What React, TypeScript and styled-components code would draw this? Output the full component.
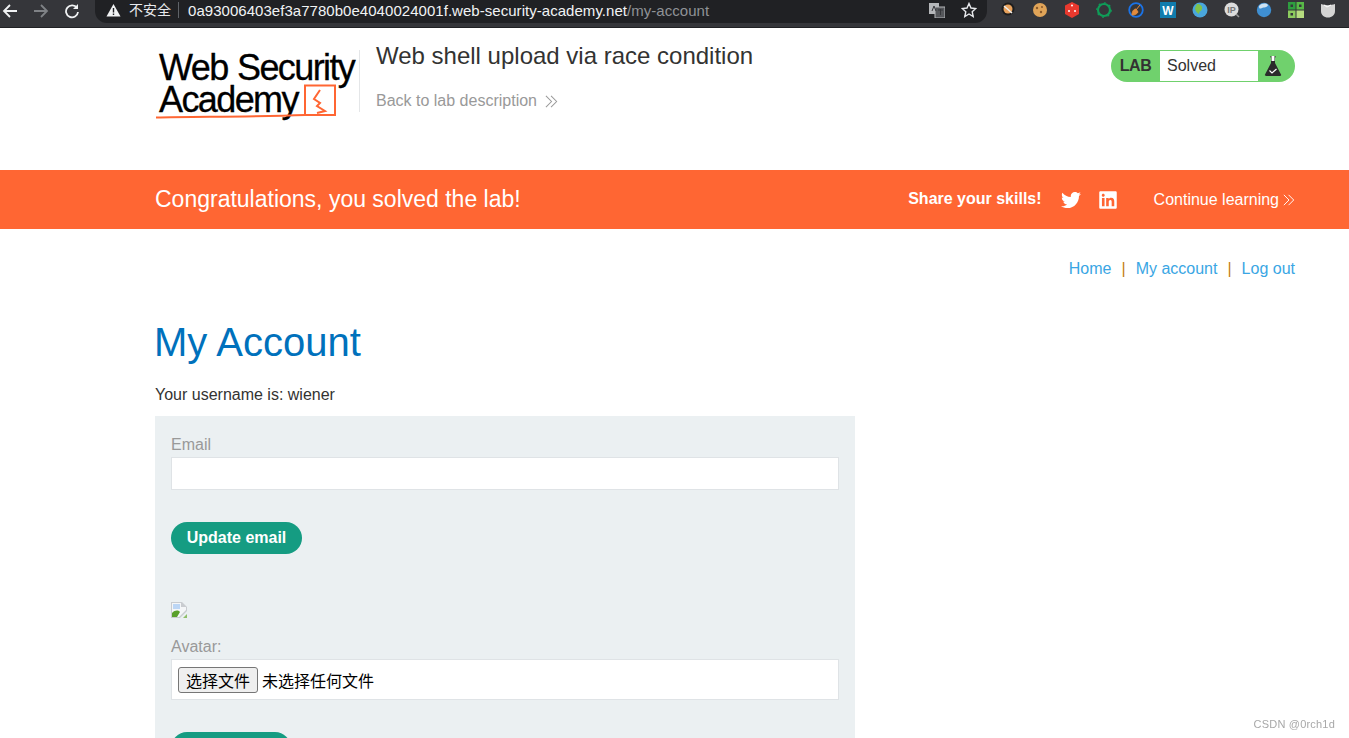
import React from 'react'
import styled, { createGlobalStyle } from 'styled-components'
import { FaTwitter, FaLinkedin } from 'react-icons/fa'

const GlobalStyle = createGlobalStyle`
  html, body {
    margin: 0;
    height: 738px;
    overflow: hidden;
    background: #fff;
    font-family: "Liberation Sans", Arial, sans-serif;
    font-size: 16px;
    color: #333332;
  }
`

// Browser chrome
const Chrome = styled.div`
  height: 27px;
  background: #35363a;
  border-bottom: 1px solid #202124;
  display: flex;
  align-items: flex-start;
`

const NavIcons = styled.div`
  width: 95px;
  height: 21px;
  flex: none;
  display: flex;
  align-items: center;
  gap: 15px;
  padding-left: 2px;
  box-sizing: border-box;
`

const Omnibox = styled.div`
  width: 892px;
  height: 23px;
  flex: none;
  background: #202124;
  border-radius: 0 0 12px 12px;
  display: flex;
  align-items: center;
  padding: 0 10px 3px 11px;
  box-sizing: border-box;
  color: #e8eaed;
  font-size: 14px;
  font-family: "Liberation Sans", "Noto Sans CJK SC", sans-serif;
`

const Insecure = styled.span`
  font-size: 14px;
  margin-left: 8px;
  padding-right: 7px;
  border-right: 1px solid #5f6368;
  line-height: 16px;
`

const Url = styled.span`
  margin-left: 9px;
  font-size: 15px;
  letter-spacing: 0.04px;
  flex: 1;
  color: #f1f3f4;
`

const UrlPath = styled.span`
  color: #8f9296;
`

const OmniIcons = styled.div`
  display: flex;
  align-items: center;
  gap: 16px;
`

const Extensions = styled.div`
  flex: 1;
  height: 20px;
  display: flex;
  align-items: center;
  gap: 16.1px;
  padding-left: 12.5px;
`

// Lab header
const Container = styled.div`
  width: 1140px;
  margin-left: 155px;
  box-sizing: border-box;
`

const LabHeader = styled(Container)`
  height: 142px;
  display: flex;
  align-items: flex-start;
`

const Logo = styled.div`
  position: relative;
  width: 204px;
  height: 64px;
  margin-top: 24px;
  flex: none;
  color: #000;
  font-size: 36px;
  line-height: 32px;
  letter-spacing: -1.6px;
  word-spacing: 1px;
  -webkit-text-stroke: 0.3px #000;
  padding-left: 4px;
  box-sizing: border-box;
  white-space: nowrap;
`

const LogoMark = styled.svg`
  position: absolute;
  left: 0;
  top: 30px;
`

const TitleBlock = styled.div`
  margin-top: 22px;
  padding: 0 0 0 16px;
  height: 62px;
  border-left: 1px solid #e4e6e8;
  flex: 1;
`

const LabTitle = styled.h2`
  margin: 0;
  font-size: 24px;
  font-weight: 400;
  line-height: 12px;
  padding-top: 0;
  color: #333332;
`

const BackLink = styled.a`
  display: flex;
  align-items: center;
  gap: 8px;
  margin-top: 30px;
  font-size: 16px;
  line-height: 18px;
  color: #999;
`

const StatusPill = styled.div`
  width: 184px;
  height: 32px;
  margin-top: 22px;
  border-radius: 16px;
  background: #70d16d;
  display: flex;
  align-items: center;
  flex: none;
  overflow: hidden;
`

const PillLabel = styled.span`
  width: 49px;
  text-align: center;
  font-weight: 700;
  font-size: 16px;
  letter-spacing: -0.4px;
  color: #333332;
  box-sizing: border-box;
`

const PillValue = styled.div`
  width: 98px;
  height: 30px;
  background: #fff;
  line-height: 29px;
  padding-left: 7px;
  box-sizing: border-box;
  font-size: 16px;
  color: #333332;
`

const Flask = styled.svg`
  margin-left: 6px;
`

// Banner
const Banner = styled.div`
  height: 59px;
  background: #ff6633;
  color: #fff;
`

const BannerInner = styled(Container)`
  height: 100%;
  display: flex;
  align-items: center;
`

const BannerTitle = styled.h4`
  margin: 0;
  flex: 1;
  font-size: 23px;
  font-weight: 400;
`

const Share = styled.span`
  font-weight: 700;
  font-size: 16px;
  margin-top: -2px;
`

const SocialRow = styled.div`
  display: flex;
  align-items: center;
  gap: 17px;
  margin: 0 36px 0 19px;
  font-size: 20px;
  height: 20px;
`

const Continue = styled.a`
  display: flex;
  align-items: center;
  gap: 4px;
  font-size: 16px;
`

// Page
const TopLinks = styled(Container)`
  display: flex;
  justify-content: flex-end;
  padding-top: 31px;
  line-height: 18px;
  height: 73px;
  color: #c47d0e;
`

const TopLink = styled.a`
  color: #3aa6e4;
`

const Sep = styled.span`
  margin: 0 10px;
`

const Heading = styled.h1`
  margin: 17px 0 0 -1px;
  font-size: 40px;
  font-weight: 400;
  line-height: 46px;
  height: 46px;
  color: #0071bc;
`

const Username = styled.p`
  margin: 21px 0 12px;
  line-height: 18px;
  color: #333332;
`

const Panel = styled.div`
  width: 700px;
  padding: 20px 16px 16px;
  box-sizing: border-box;
  background: #ebf0f2;
`

const FieldLabel = styled.label`
  display: block;
  color: #999;
  line-height: 18px;
  height: 21px;
`

const EmailInput = styled.div`
  height: 33px;
  background: #fff;
  border: 1px solid #dfe3e6;
  box-sizing: border-box;
`

const PillButton = styled.button<{ $wide: number }>`
  display: block;
  width: ${(p) => p.$wide}px;
  height: 32px;
  border: 0;
  border-radius: 16px;
  background: #159c82;
  color: #fff;
  font-family: inherit;
  font-size: 16px;
  font-weight: 700;
  padding: 0;
`

const EmailButton = styled(PillButton)`
  margin-top: 32px;
`

const BrokenImage = styled.svg`
  display: block;
  margin-top: 48px;
`

const AvatarLabel = styled(FieldLabel)`
  margin-top: 20px;
  height: 21px;
`

const FileBox = styled.div`
  height: 41px;
  background: #fff;
  border: 1px solid #dfe3e6;
  box-sizing: border-box;
  display: flex;
  align-items: center;
  padding-left: 6px;
  font-family: "Noto Sans CJK SC", sans-serif;
  font-size: 16px;
  color: #000;
  gap: 4px;
`

const FileButton = styled.span`
  width: 80px;
  height: 26px;
  box-sizing: border-box;
  border: 1px solid #767676;
  border-radius: 3px;
  background: #efefef;
  line-height: 24px;
  text-align: center;
`

const UploadButton = styled(PillButton)`
  margin-top: 32px;
`

const Watermark = styled.div`
  position: fixed;
  right: 14px;
  top: 717px;
  font-size: 11px;
  line-height: 14px;
  letter-spacing: 0.2px;
  color: #a8a8a8;
`

function Chevrons({ color, size }: { color: string; size: number }): JSX.Element {
  return (
    <svg width={size} height={size} viewBox='0 0 14 14' fill='none' stroke={color} strokeWidth='1.1'>
      <path d='M1 1l6 6-6 6M6.500 1l6 6-6 6' />
    </svg>
  )
}

function Extension({ children }: { children: React.ReactNode }): JSX.Element {
  return (
    <svg width='16' height='16' viewBox='0 0 16 16'>
      {children}
    </svg>
  )
}

export default function App(): JSX.Element {
  return (
    <>
      <GlobalStyle />
      <Chrome>
        <NavIcons>
          <svg width='16' height='16' viewBox='0 0 16 16' fill='none' stroke='#f1f3f4' strokeWidth='1.8'>
            <path d='M15 8H2M8 2L2 8l6 6' />
          </svg>
          <svg width='16' height='16' viewBox='0 0 16 16' fill='none' stroke='#7f8286' strokeWidth='1.8'>
            <path d='M1 8h13M8 2l6 6-6 6' />
          </svg>
          <svg width='16' height='16' viewBox='0 0 16 16' fill='none' stroke='#f1f3f4' strokeWidth='1.8'>
            <path d='M13 5a6 6 0 1 0 1 4' />
            <path d='M14 1v5H9' fill='#f1f3f4' stroke='none' />
          </svg>
        </NavIcons>
        <Omnibox>
          <svg width='15' height='14' viewBox='0 0 15 14'>
            <path d='M7.500 1L14.500 13.500H.5z' fill='#f1f3f4' />
            <path d='M6.800 5h1.400v4.500H6.800zM6.800 10.500h1.400V12H6.800z' fill='#202124' />
          </svg>
          <Insecure>不安全</Insecure>
          <Url>
            0a93006403ef3a7780b0e4040024001f.web-security-academy.net<UrlPath>/my-account</UrlPath>
          </Url>
          <OmniIcons>
            <svg width='16' height='15' viewBox='0 0 16 15'>
              <rect x='0' y='0' width='10' height='11' fill='#b5b7ba' />
              <rect x='6' y='4' width='10' height='11' fill='#55575b' stroke='#b5b7ba' />
              <path d='M3 8l2-5 2 5M9 7h5M11.500 6v6' stroke='#35363a' strokeWidth='1' fill='none' />
            </svg>
            <svg width='16' height='16' viewBox='0 0 16 16' fill='none' stroke='#e8eaed' strokeWidth='1.400'>
              <path d='M8 1.500l2 4.500 4.800.5-3.600 3.200 1 4.800L8 12l-4.200 2.500 1-4.800L1.200 6.500 6 6z' />
            </svg>
          </OmniIcons>
        </Omnibox>
        <Extensions>
          <Extension>
            <circle cx='8' cy='7' r='6.500' fill='#1d1d1d' />
            <circle cx='8' cy='7' r='4.500' fill='#e8a25c' />
            <path d='M4 4l8 7' stroke='#eee' strokeWidth='1.500' />
          </Extension>
          <Extension>
            <circle cx='8' cy='8' r='7' fill='#e0a458' />
            <circle cx='5' cy='6' r='1.200' fill='#8a5a2b' />
            <circle cx='10' cy='5' r='1' fill='#8a5a2b' />
            <circle cx='9' cy='10' r='1.200' fill='#8a5a2b' />
          </Extension>
          <Extension>
            <path d='M8 0l7 3.500v8.500L8 16l-7-4V3.500z' fill='#e8392e' />
            <circle cx='8' cy='3.500' r='1' fill='#fff' />
            <circle cx='5' cy='9' r='1' fill='#fff' />
            <circle cx='11' cy='9' r='1' fill='#fff' />
          </Extension>
          <Extension>
            <circle cx='8' cy='8' r='6' fill='none' stroke='#0f9d58' strokeWidth='2.200' />
            <circle cx='8' cy='8' r='7.200' fill='none' stroke='#0f9d58' strokeWidth='1.200' strokeDasharray='2 3.600' />
          </Extension>
          <Extension>
            <circle cx='8' cy='8' r='6.800' fill='#35363a' stroke='#1a73e8' strokeWidth='1.800' />
            <path d='M12 3L8 8M4 13c0-4 2-6 4-6l2 3c-1 2-3 3-6 3z' fill='#e38b3c' stroke='#e38b3c' />
          </Extension>
          <svg width='16' height='16' viewBox='0 0 16 16'>
            <rect width='16' height='16' fill='#117cad' />
            <text x='8' y='12.500' textAnchor='middle' fontSize='12' fontWeight='700' fill='#fff' fontFamily='Liberation Sans'>W</text>
          </svg>
          <Extension>
            <circle cx='8' cy='8' r='7.500' fill='#49a6dc' />
            <path d='M5 2c3 0 6 2 5 5s-3 2-3 5c-2-1-4-3-4-6z' fill='#7fc24a' />
          </Extension>
          <svg width='16' height='16' viewBox='0 0 16 16'>
            <circle cx='7.500' cy='7.500' r='7' fill='#dcdcdc' />
            <text x='7.500' y='11' textAnchor='middle' fontSize='9' fontWeight='700' fill='#777' fontFamily='Liberation Sans'>IP</text>
            <path d='M12 12l3 3' stroke='#999' strokeWidth='1.500' />
          </svg>
          <Extension>
            <circle cx='8' cy='8' r='7.200' fill='#3f8fd2' />
            <path d='M3 4c3-3 7-3 9-1-1 3-4 2-6 3S3 7 3 4z' fill='#cfe3f2' />
          </Extension>
          <Extension>
            <rect x='0' y='0' width='7.500' height='7.500' fill='#2e9e3f' />
            <rect x='8.500' y='0' width='7.500' height='7.500' fill='#58b947' />
            <rect x='0' y='8.500' width='7.500' height='7.500' fill='#8ccb5e' />
            <rect x='8.500' y='8.500' width='7.500' height='7.500' fill='#b6dc7f' />
            <rect x='2.500' y='2.500' width='2.500' height='2.500' fill='#35363a' />
            <rect x='11' y='2.500' width='2.500' height='2.500' fill='#35363a' />
            <rect x='2.500' y='11' width='2.500' height='2.500' fill='#35363a' />
          </Extension>
          <Extension>
            <path d='M1 2c4 1.500 10 1.500 14 0v7c0 4-3 6.500-7 6.500S1 13 1 9z' fill='#d4d4d4' />
            <path d='M4 3l3 2 4-2' stroke='#fff' fill='none' />
          </Extension>
        </Extensions>
      </Chrome>

      <LabHeader>
        <Logo>
          Web Security
          <br />
          Academy
          <LogoMark width='204' height='42' viewBox='0 0 204 42'>
            <path d='M1 35.500C40 34.500 100 35 150 33' stroke='#ff6633' strokeWidth='2' fill='none' />
            <path d='M150 33V3.500h30V33h-30' stroke='#ff6633' strokeWidth='2' fill='none' />
            <path d='M165 8l-6 9 6 4-3 3 8 5-8 2' stroke='#ff6633' strokeWidth='2' fill='none' />
          </LogoMark>
        </Logo>
        <TitleBlock>
          <LabTitle>Web shell upload via race condition</LabTitle>
          <BackLink>
            Back to lab description
            <Chevrons color='#999' size={13} />
          </BackLink>
        </TitleBlock>
        <StatusPill>
          <PillLabel>LAB</PillLabel>
          <PillValue>Solved</PillValue>
          <Flask width='18' height='22' viewBox='0 0 18 22'>
            <path d='M6.500 1h5v1.500h-.5V8l6 11.500c.4 1-.2 1.500-1 1.500H2c-.8 0-1.400-.5-1-1.500L7 8V2.500h-.5z' fill='#2b2b2b' />
            <path d='M7.500 1h3v5h-3z' fill='#fff' />
            <path d='M5.500 15.500l2.500 2.500 4.500-4' stroke='#fff' strokeWidth='1.200' fill='none' />
          </Flask>
        </StatusPill>
      </LabHeader>

      <Banner>
        <BannerInner>
          <BannerTitle>Congratulations, you solved the lab!</BannerTitle>
          <Share>Share your skills!</Share>
          <SocialRow>
            <FaTwitter />
            <FaLinkedin />
          </SocialRow>
          <Continue>
            Continue learning
            <Chevrons color='#fff' size={12} />
          </Continue>
        </BannerInner>
      </Banner>

      <TopLinks>
        <TopLink>Home</TopLink>
        <Sep>|</Sep>
        <TopLink>My account</TopLink>
        <Sep>|</Sep>
        <TopLink>Log out</TopLink>
      </TopLinks>

      <Container>
        <Heading>My Account</Heading>
        <Username>Your username is: wiener</Username>
        <Panel>
          <FieldLabel>Email</FieldLabel>
          <EmailInput />
          <EmailButton $wide={131}>Update email</EmailButton>
          <BrokenImage width='16' height='16' viewBox='0 0 16 16'>
            <path d='M0 0h11l5 5v4L9 16H0z' fill='#c9ccd0' />
            <path d='M1 1h9v4h5v3L8 15H1z' fill='#f4f6f8' />
            <path d='M2 2h7v5H2z' fill='#bcd6f5' />
            <path d='M1 15V11c3-3 6-3 8-1l-3 5z' fill='#5aa02c' />
            <path d='M12 16l4-4v4z' fill='#8fbf6a' />
          </BrokenImage>
          <AvatarLabel>Avatar:</AvatarLabel>
          <FileBox>
            <FileButton>选择文件</FileButton>
            未选择任何文件
          </FileBox>
          <UploadButton $wide={120}>Upload</UploadButton>
        </Panel>
      </Container>

      <Watermark>CSDN @0rch1d</Watermark>
    </>
  )
}
